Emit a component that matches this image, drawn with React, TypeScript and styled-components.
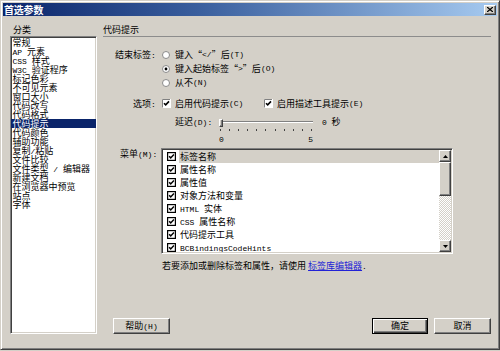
import React from "react";
import styled, { createGlobalStyle, css } from "styled-components";

const GlobalStyle = createGlobalStyle`
  html, body { margin: 0; padding: 0; background: #d4d0c8; }
  body {
    font-family: "Noto Sans CJK SC", "Noto Sans", sans-serif;
    font-size: 9px;
    color: #000;
  }
`;

const raisedEdge = css`
  box-sizing: border-box;
  border: 1px solid;
  border-color: #fff #404040 #404040 #fff;
  box-shadow: inset -1px -1px 0 #808080, inset 1px 1px 0 #d4d0c8;
  background: #d4d0c8;
`;

const sunkenEdge = css`
  box-sizing: border-box;
  border: 1px solid;
  border-color: #808080 #fff #fff #808080;
  box-shadow: inset 1px 1px 0 #404040, inset -1px -1px 0 #d4d0c8;
`;

const Window = styled.div`
  box-sizing: border-box;
  width: 500px;
  height: 350px;
  display: flex;
  flex-direction: column;
  padding: 2px;
  background: #d4d0c8;
  border: 1px solid;
  border-color: #d4d0c8 #404040 #404040 #d4d0c8;
  box-shadow: inset 1px 1px 0 #fff, inset -1px -1px 0 #808080;
`;

const TitleBar = styled.div`
  height: 13px;
  display: flex;
  align-items: center;
  justify-content: space-between;
  padding: 0 1px 0 1px;
  background: linear-gradient(to right, #0a246a 0%, #3a5f9e 40%, #a6caf0 100%);
`;

const Title = styled.span`
  color: #fff;
  font-weight: bold;
  font-size: 10px;
  line-height: 13px;
  letter-spacing: -0.2px;
`;

const CloseButton = styled.div`
  ${raisedEdge};
  width: 12px;
  height: 10px;
  display: flex;
  align-items: center;
  justify-content: center;
`;

const Body = styled.div`
  display: grid;
  grid-template-columns: 87px 388px;
  column-gap: 6px;
  padding: 8px 0 0 7px;
`;

const LeftPane = styled.div`
  display: flex;
  flex-direction: column;
`;

const PaneLabel = styled.div<{ $indent?: number }>`
  line-height: 12px;
  height: 12px;
  padding-left: ${(p) => p.$indent ?? 0}px;
  white-space: nowrap;
`;

const CategoryList = styled.div`
  ${sunkenEdge};
  height: 298px;
  background: #fff;
  padding: 1px 0;
  overflow: hidden;
`;

const CategoryItem = styled.div<{ $selected?: boolean }>`
  height: 9px;
  line-height: 9px;
  padding-left: 1.5px;
  white-space: nowrap;
  background: ${(p) => (p.$selected ? "#0a246a" : "transparent")};
  color: ${(p) => (p.$selected ? "#fff" : "#000")};
`;

const RightPane = styled.div`
  display: flex;
  flex-direction: column;
  height: 310px;
`;

const SectionHeader = styled.div`
  line-height: 12px;
  height: 12px;
  border-bottom: 1px solid #8c8c8c;
`;

const FormRow = styled.div<{ $mt?: number; $h?: number }>`
  display: grid;
  grid-template-columns: 58px 1fr;
  margin-top: ${(p) => p.$mt ?? 0}px;
  ${(p) => (p.$h ? `height: ${p.$h}px;` : "")}
`;

const FieldLabel = styled.div<{ $indent?: number; $lh?: number }>`
  padding-left: ${(p) => p.$indent ?? 0}px;
  line-height: ${(p) => p.$lh ?? 12}px;
  white-space: nowrap;
`;

const RadioGroup = styled.div`
  display: flex;
  flex-direction: column;
`;

const RadioOption = styled.div`
  height: 14px;
  display: flex;
  align-items: center;
  white-space: nowrap;
  line-height: 14px;
`;

const RadioSvg = styled.svg`
  margin: 0 5px 0 1px;
  flex-shrink: 0;
`;

const OptionGrid = styled.div`
  display: grid;
  grid-template-columns: 102px auto;
  height: 15px;
  align-items: center;
`;

const CheckOption = styled.div`
  display: flex;
  align-items: center;
  white-space: nowrap;
  line-height: 15px;
`;

const CheckSvg = styled.svg`
  margin: 0 4px 0 1px;
  flex-shrink: 0;
`;

const DelayBox = styled.div`
  display: flex;
  align-items: flex-start;
  padding-left: 14px;
  height: 33px;
`;

const DelayLabel = styled.div`
  width: 44px;
  line-height: 14px;
  white-space: nowrap;
`;

const Slider = styled.div`
  width: 94px;
  display: flex;
  flex-direction: column;
`;

const TrackArea = styled.div`
  position: relative;
  height: 14px;
`;

const Track = styled.div`
  margin-top: 6px;
  height: 0;
  border-top: 1px solid #808080;
  border-bottom: 1px solid #fff;
`;

const Thumb = styled.div`
  ${raisedEdge};
  position: absolute;
  left: 0;
  top: 4px;
  width: 4px;
  height: 8px;
`;

const Ticks = styled.div`
  display: flex;
  justify-content: space-between;
  padding: 0 1px;
  height: 2px;
`;

const Tick = styled.span`
  width: 1px;
  height: 2px;
  background: #404040;
`;

const TickLabels = styled.div`
  display: flex;
  justify-content: space-between;
  margin-top: 4px;
  line-height: 10px;
`;

const SliderValue = styled.div`
  margin-left: 9px;
  line-height: 14px;
  white-space: nowrap;
`;

const MenuList = styled.div`
  ${sunkenEdge};
  width: 292px;
  height: 106px;
  background: #fff;
  display: flex;
  padding: 1px;
`;

const MenuItems = styled.div`
  flex: 1;
  display: flex;
  flex-direction: column;
  overflow: hidden;
`;

const MenuItem = styled.div`
  height: 13px;
  flex-shrink: 0;
  display: flex;
  align-items: center;
`;

const MenuBoxSvg = styled.svg`
  margin: 0 3px 0 4px;
  flex-shrink: 0;
`;

const MenuText = styled.div<{ $focused?: boolean }>`
  flex: 1;
  line-height: 13px;
  height: 13px;
  padding-left: 1px;
  white-space: nowrap;
  background: ${(p) => (p.$focused ? "#d4d0c8" : "transparent")};
`;

const ScrollBar = styled.div`
  width: 12px;
  display: flex;
  flex-direction: column;
`;

const ScrollButton = styled.div`
  ${raisedEdge};
  height: 12px;
  display: flex;
  align-items: center;
  justify-content: center;
`;

const ScrollThumb = styled.div`
  ${raisedEdge};
  height: 34px;
`;

const ScrollTrack = styled.div`
  flex: 1;
  background: repeating-conic-gradient(#ffffff 0 25%, #d4d0c8 0 50%) 0 0 / 2px 2px;
`;

const NoteText = styled.div`
  line-height: 12px;
  padding-left: 1px;
  white-space: nowrap;
`;

const Link = styled.a`
  color: #2222d6;
  text-decoration: underline;
  cursor: pointer;
`;

const ButtonRow = styled.div`
  margin-top: auto;
  display: flex;
  gap: 6px;
  padding-left: 10px;
`;

const Spacer = styled.div`
  flex: 1;
`;

const Button = styled.button<{ $w: number; $default?: boolean }>`
  width: ${(p) => p.$w}px;
  height: 16px;
  box-sizing: border-box;
  padding: 0;
  margin: 0;
  font-family: inherit;
  font-size: 9px;
  line-height: 12px;
  color: #000;
  background: #d4d0c8;
  border: 1px solid;
  ${(p) =>
    p.$default
      ? css`
          border-color: #000;
          box-shadow: inset 1px 1px 0 #fff, inset -1px -1px 0 #404040,
            inset -2px -2px 0 #808080;
        `
      : css`
          border-color: #fff #404040 #404040 #fff;
          box-shadow: inset -1px -1px 0 #808080, inset 1px 1px 0 #d4d0c8;
        `}
`;

const Mono = styled.span`
  font-family: "Liberation Mono", monospace;
  font-size: 8px;
`;

const T: React.FC<{ text: string }> = ({ text }) => {
  const parts = text.split(/([\x20-\x7e]+)/);
  return (
    <>
      {parts.map((p, i) =>
        p === "" ? null : i % 2 === 1 ? (
          <Mono key={i}>{p}</Mono>
        ) : (
          <React.Fragment key={i}>{p}</React.Fragment>
        )
      )}
    </>
  );
};

const Radio: React.FC<{ checked?: boolean }> = ({ checked }) => (
  <RadioSvg width="8" height="8" viewBox="0 0 8 8">
    <circle cx="4" cy="4" r="3.5" fill="#fff" stroke="#8a8a8a" strokeWidth="1" />
    {checked && <circle cx="4" cy="4" r="1.4" fill="#000" />}
  </RadioSvg>
);

const Check: React.FC = () => (
  <CheckSvg width="9" height="9" viewBox="0 0 9 9">
    <rect x="0" y="0" width="9" height="9" fill="#fff" />
    <path d="M0.5 9V0.5H9" stroke="#808080" fill="none" />
    <path d="M0.5 8.5H8.5V0" stroke="#ffffff" fill="none" />
    <path d="M2 4.2L3.7 5.9L7 2.4" stroke="#000" strokeWidth="1.6" fill="none" />
  </CheckSvg>
);

const MenuCheck: React.FC = () => (
  <MenuBoxSvg width="9" height="9" viewBox="0 0 9 9">
    <rect x="0.6" y="0.6" width="7.8" height="7.8" fill="#fff" stroke="#000" strokeWidth="1.2" />
    <path d="M2.1 4.3L3.7 5.9L6.9 2.6" stroke="#000" strokeWidth="1.5" fill="none" />
  </MenuBoxSvg>
);

const ArrowUp: React.FC = () => (
  <svg width="5" height="3" viewBox="0 0 5 3">
    <path d="M2.5 0L5 3H0Z" fill="#000" />
  </svg>
);

const ArrowDown: React.FC = () => (
  <svg width="5" height="3" viewBox="0 0 5 3">
    <path d="M0 0H5L2.5 3Z" fill="#000" />
  </svg>
);

const categories = [
  "常规",
  "AP 元素",
  "CSS 样式",
  "W3C 验证程序",
  "标记色彩",
  "不可见元素",
  "窗口大小",
  "代码改写",
  "代码格式",
  "代码提示",
  "代码颜色",
  "辅助功能",
  "复制/粘贴",
  "文件比较",
  "文件类型 / 编辑器",
  "新建文档",
  "在浏览器中预览",
  "站点",
  "字体",
];

const menuItems = [
  "标签名称",
  "属性名称",
  "属性值",
  "对象方法和变量",
  "HTML 实体",
  "CSS 属性名称",
  "代码提示工具",
  "BCBindingsCodeHints",
];

const ticks = Array.from({ length: 11 }, (_, i) => i);

export default function App() {
  return (
    <>
      <GlobalStyle />
      <Window>
        <TitleBar>
          <Title>首选参数</Title>
          <CloseButton>
            <svg width="6" height="5" viewBox="0 0 6 5">
              <path d="M0 0L6 5M6 0L0 5" stroke="#000" strokeWidth="1.3" />
            </svg>
          </CloseButton>
        </TitleBar>
        <Body>
          <LeftPane>
            <PaneLabel $indent={3}>分类</PaneLabel>
            <CategoryList>
              {categories.map((c) => (
                <CategoryItem key={c} $selected={c === "代码提示"}>
                  <T text={c} />
                </CategoryItem>
              ))}
            </CategoryList>
          </LeftPane>
          <RightPane>
            <SectionHeader>代码提示</SectionHeader>

            <FormRow $mt={11}>
              <FieldLabel $indent={12} $lh={14}>
                <T text="结束标签:" />
              </FieldLabel>
              <RadioGroup>
                <RadioOption>
                  <Radio />
                  <T text="键入 “</” 后(T)" />
                </RadioOption>
                <RadioOption>
                  <Radio checked />
                  <T text="键入起始标签 “>” 后(O)" />
                </RadioOption>
                <RadioOption>
                  <Radio />
                  <T text="从不(N)" />
                </RadioOption>
              </RadioGroup>
            </FormRow>

            <FormRow $mt={6}>
              <FieldLabel $indent={30} $lh={15}>
                <T text="选项:" />
              </FieldLabel>
              <OptionGrid>
                <CheckOption>
                  <Check />
                  <T text="启用代码提示(C)" />
                </CheckOption>
                <CheckOption>
                  <Check />
                  <T text="启用描述工具提示(E)" />
                </CheckOption>
              </OptionGrid>
            </FormRow>

            <FormRow $mt={3}>
              <FieldLabel />
              <DelayBox>
                <DelayLabel>
                  <T text="延迟(D):" />
                </DelayLabel>
                <Slider>
                  <TrackArea>
                    <Track />
                    <Thumb />
                  </TrackArea>
                  <Ticks>
                    {ticks.map((t) => (
                      <Tick key={t} />
                    ))}
                  </Ticks>
                  <TickLabels>
                    <T text="0" />
                    <T text="5" />
                  </TickLabels>
                </Slider>
                <SliderValue>
                  <T text="0 秒" />
                </SliderValue>
              </DelayBox>
            </FormRow>

            <FormRow>
              <FieldLabel $indent={17} $lh={12}>
                <T text="菜单(M):" />
              </FieldLabel>
              <MenuList>
                <MenuItems>
                  {menuItems.map((m, i) => (
                    <MenuItem key={m}>
                      <MenuCheck />
                      <MenuText $focused={i === 0}>
                        <T text={m} />
                      </MenuText>
                    </MenuItem>
                  ))}
                </MenuItems>
                <ScrollBar>
                  <ScrollButton>
                    <ArrowUp />
                  </ScrollButton>
                  <ScrollThumb />
                  <ScrollTrack />
                  <ScrollButton>
                    <ArrowDown />
                  </ScrollButton>
                </ScrollBar>
              </MenuList>
            </FormRow>

            <FormRow $mt={6}>
              <FieldLabel />
              <NoteText>
                若要添加或删除标签和属性，请使用 <Link>标签库编辑器</Link>
                <T text="." />
              </NoteText>
            </FormRow>

            <ButtonRow>
              <Button $w={57}>
                <T text="帮助(H)" />
              </Button>
              <Spacer />
              <Button $w={56} $default>
                确定
              </Button>
              <Button $w={57}>取消</Button>
            </ButtonRow>
          </RightPane>
        </Body>
      </Window>
    </>
  );
}
